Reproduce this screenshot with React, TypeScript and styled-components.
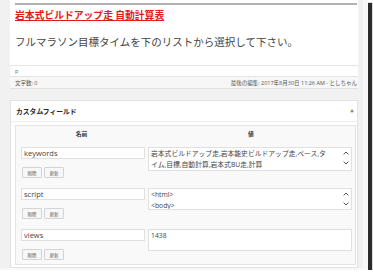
import React from "react";
import styled, { createGlobalStyle } from "styled-components";

const GlobalStyle = createGlobalStyle`
	html, body {
		margin: 0;
		padding: 0;
		background: #ffffff;
	}
	body {
		font-family: "Open Sans", "Noto Sans CJK JP", sans-serif;
		color: #444;
	}
`;

type Field = { name: string; lines: string[]; height: number };

const fields: Field[] = [
	{
		name: "keywords",
		lines: ["岩本式ビルドアップ走,岩本能史ビルドアップ走,ペース,タ", "イム,目標,自動計算,岩本式BU走,計算"],
		height: 24,
	},
	{ name: "script", lines: ["<html>", "<body>"], height: 22 },
	{ name: "views", lines: ["1438"], height: 22 },
];

const Chevron = ({ up }: { up?: boolean }) => (
	<svg width="6" height="4" viewBox="0 0 6 4">
		<path d={up ? "M0.6 3.4 L3 1 L5.4 3.4" : "M0.6 0.6 L3 3 L5.4 0.6"} fill="none" stroke="#555" strokeWidth="1" />
	</svg>
);

export default function App() {
	return (
		<>
			<GlobalStyle />
			<Frame>
				<Editor>
					<Content>
						<Rule />
						<Heading>岩本式ビルドアップ走 自動計算表</Heading>
						<Lead>フルマラソン目標タイムを下のリストから選択して下さい。</Lead>
					</Content>
					<PathRow>p</PathRow>
					<CountRow>
						<span>文字数: 0</span>
						<span>最後の編集: 2017年8月30日 11:26 AM - としちゃん</span>
					</CountRow>
				</Editor>
				<Panel>
					<PanelHeader>
						<PanelTitle>カスタムフィールド</PanelTitle>
						<Toggle>▲</Toggle>
					</PanelHeader>
					<Table>
						<HeadCell>名前</HeadCell>
						<HeadCell>値</HeadCell>
						{fields.map((f) => (
							<React.Fragment key={f.name}>
								<NameCell>
									<NameInput>{f.name}</NameInput>
									<Buttons>
										<SmallButton>削除</SmallButton>
										<SmallButton>更新</SmallButton>
									</Buttons>
								</NameCell>
								<ValueCell>
									<ValueBox $h={f.height}>
										<ValueText>
											{f.lines.map((l, i) => (
												<div key={i}>{l}</div>
											))}
										</ValueText>
										{f.lines.length > 1 && (
											<Arrows>
												<Chevron up />
												<Chevron />
											</Arrows>
										)}
									</ValueBox>
								</ValueCell>
							</React.Fragment>
						))}
					</Table>
				</Panel>
			</Frame>
		</>
	);
}

const Frame = styled.div`
	box-sizing: border-box;
	width: 368px;
	height: 270px;
	padding: 0 5px 0 10px;
	background: #f1f1f1;
	border-right: 5px solid #f8f8f8;
	border-bottom: 2px solid #f8f8f8;
	box-shadow: 4px 3px 1px #2b2b2b;
	display: flex;
	flex-direction: column;
	overflow: hidden;
`;

const Editor = styled.div`
	background: #fff;
	border-bottom: 1px solid #e2e2e2;
`;

const Content = styled.div`
	height: 65px;
	box-sizing: border-box;
	padding: 3px 1px 0 5px;
`;

const Rule = styled.div`
	height: 2px;
	background: #b0b0b0;
`;

const Heading = styled.div`
	margin-top: 4px;
	font-size: 9.8px;
	line-height: 12px;
	font-weight: bold;
	color: #e01b1b;
	text-decoration: underline;
	font-family: "Noto Sans CJK JP", sans-serif;
`;

const Lead = styled.div`
	margin-top: 14px;
	font-size: 10.5px;
	line-height: 14px;
	color: #444;
	font-family: "Noto Sans CJK JP", sans-serif;
`;

const PathRow = styled.div`
	height: 10px;
	border-top: 1px solid #e5e5e5;
	padding-left: 5px;
	font-size: 5.5px;
	line-height: 10px;
	color: #666;
`;

const CountRow = styled.div`
	height: 11px;
	border-top: 1px solid #e5e5e5;
	background: #f7f7f7;
	padding: 0 1px 0 5px;
	display: flex;
	justify-content: space-between;
	align-items: center;
	font-size: 5.5px;
	color: #555;
`;

const Panel = styled.div`
	margin-top: 11px;
	background: #fff;
	border: 1px solid #e3e3e3;
	padding: 0 1px 2px 4px;
`;

const PanelHeader = styled.div`
	height: 20px;
	margin: 0 -1px 3px -4px;
	padding: 0 3px 0 5px;
	border-bottom: 1px solid #eeeeee;
	display: flex;
	align-items: center;
	justify-content: space-between;
`;

const PanelTitle = styled.span`
	font-size: 6.8px;
	font-weight: bold;
	color: #23282d;
	font-family: "Noto Sans CJK JP", sans-serif;
`;

const Toggle = styled.span`
	font-size: 4px;
	color: #888;
`;

const Table = styled.div`
	display: grid;
	grid-template-columns: 131px 1fr;
	background: #f9f9f9;
	border: 1px solid #e4e4e4;
`;

const HeadCell = styled.div`
	height: 15px;
	display: flex;
	align-items: center;
	justify-content: center;
	font-size: 5.8px;
	font-weight: bold;
	color: #333;
	font-family: "Noto Sans CJK JP", sans-serif;
`;

const NameCell = styled.div`
	padding: 6px 2px 4px 5px;
`;

const NameInput = styled.div`
	height: 12px;
	box-sizing: border-box;
	border: 1px solid #e0e0e0;
	background: #fff;
	padding-left: 2px;
	font-size: 7.5px;
	line-height: 10px;
	color: #444;
`;

const Buttons = styled.div`
	margin-top: 8px;
	display: flex;
	gap: 2px;
	padding-left: 1px;
`;

const SmallButton = styled.div`
	width: 20px;
	height: 11px;
	box-sizing: border-box;
	border: 1px solid #d4d4d4;
	border-radius: 1px;
	background: #f7f7f7;
	font-size: 4.5px;
	display: flex;
	align-items: center;
	justify-content: center;
	color: #555;
	font-family: "Noto Sans CJK JP", sans-serif;
`;

const ValueCell = styled.div`
	padding: 6px 3px 4px 1px;
`;

const ValueBox = styled.div<{ $h: number }>`
	height: ${(p) => p.$h}px;
	box-sizing: border-box;
	border: 1px solid #e0e0e0;
	background: #fff;
	display: flex;
	overflow: hidden;
`;

const ValueText = styled.div`
	flex: 1;
	padding: 0 0 0 2px;
	font-size: 6.8px;
	line-height: 11px;
	color: #444;
	white-space: nowrap;
	overflow: hidden;
`;

const Arrows = styled.div`
	width: 10px;
	padding-top: 3px;
	display: flex;
	flex-direction: column;
	align-items: center;
	gap: 6px;
`;
